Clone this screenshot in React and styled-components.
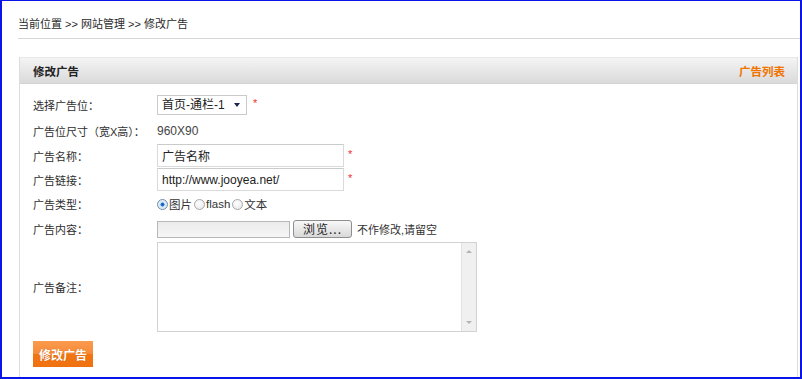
import React from "react";
import styled, { createGlobalStyle } from "styled-components";

const GlobalStyle = createGlobalStyle`
  html, body {
    margin: 0;
    padding: 0;
    background: #fff;
  }
  body {
    font-family: "Liberation Sans", "Noto Sans CJK SC", sans-serif;
    font-size: 12px;
    color: #333;
  }
`;

export default function App() {
  return (
    <Frame>
      <GlobalStyle />
      <Crumbs>当前位置 &gt;&gt; 网站管理 &gt;&gt; 修改广告</Crumbs>
      <Panel>
        <PanelHead>
          <PanelTitle>修改广告</PanelTitle>
          <HeadLink href="#">广告列表</HeadLink>
        </PanelHead>
        <FormBody>
          <Row $h={24}>
            <Label>选择广告位：</Label>
            <SelectBox>
              <Select defaultValue="1">
                <option value="1">首页-通栏-1</option>
              </Select>
              <Caret />
            </SelectBox>
            <Req $gap={6}>*</Req>
          </Row>
          <Row $h={27}>
            <Label>广告位尺寸（宽X高）：</Label>
            <Value>960X90</Value>
          </Row>
          <Row $h={24}>
            <Label>广告名称：</Label>
            <TextInput defaultValue="广告名称" />
            <Req $gap={4}>*</Req>
          </Row>
          <Row $h={24}>
            <Label>广告链接：</Label>
            <TextInput defaultValue="http://www.jooyea.net/" />
            <Req $gap={4}>*</Req>
          </Row>
          <Row $h={24}>
            <Label>广告类型：</Label>
            <RadioGroup>
              <Radio $on />
              <RadioText>图片</RadioText>
              <Radio />
              <RadioText>flash</RadioText>
              <Radio />
              <RadioText>文本</RadioText>
            </RadioGroup>
          </Row>
          <Row $h={26}>
            <Label>广告内容：</Label>
            <FileBox />
            <Browse type="button">浏览...</Browse>
            <Hint>不作修改,请留空</Hint>
          </Row>
          <Row $h={90}>
            <Label>广告备注：</Label>
            <AreaBox>
              <Area />
              <ScrollTrack>
                <Arrow $dir="up" />
                <Arrow $dir="down" />
              </ScrollTrack>
            </AreaBox>
          </Row>
          <Submit type="button">修改广告</Submit>
        </FormBody>
      </Panel>
    </Frame>
  );
}

const Frame = styled.div`
  box-sizing: border-box;
  width: 802px;
  height: 379px;
  border: 2px solid #0a14e8;
  border-top-width: 1px;
  padding-left: 16px;
  display: flex;
  flex-direction: column;
  overflow: hidden;
`;

const Crumbs = styled.div`
  box-sizing: border-box;
  height: 38px;
  padding-top: 16px;
  line-height: 14px;
  font-size: 11px;
  color: #2a2a2a;
  border-bottom: 1px solid #d6d6d6;
`;

const Panel = styled.div`
  flex: 1;
  margin: 18px 2px 0 1px;
  border-left: 1px solid #dcdcdc;
  border-right: 1px solid #dcdcdc;
`;

const PanelHead = styled.div`
  box-sizing: border-box;
  height: 27px;
  padding: 0 12px 0 13px;
  display: flex;
  align-items: center;
  justify-content: space-between;
  border-top: 1px solid #e8e8e8;
  border-bottom: 1px solid #d4d4d4;
  background: linear-gradient(#f4f4f4, #dadada);
`;

const PanelTitle = styled.span`
  font-size: 11.5px;
  font-weight: bold;
  color: #222;
`;

const HeadLink = styled.a`
  font-size: 11.5px;
  font-weight: bold;
  color: #f07400;
  text-decoration: none;
`;

const FormBody = styled.div`
  padding: 9px 0 0 13px;
  display: flex;
  flex-direction: column;
`;

const Row = styled.div`
  height: ${(p) => p.$h}px;
  display: flex;
  align-items: center;
`;

const Label = styled.span`
  width: 124px;
  flex-shrink: 0;
  font-size: 11px;
  color: #2e2e2e;
`;

const Value = styled.span`
  font-size: 12px;
  color: #444;
`;

const SelectBox = styled.div`
  box-sizing: border-box;
  width: 90px;
  height: 20px;
  padding: 0 6px 0 4px;
  display: flex;
  align-items: center;
  border: 1px solid #cacaca;
  background: #fff;
`;

const Select = styled.select`
  flex: 1;
  min-width: 0;
  appearance: none;
  border: none;
  outline: none;
  padding: 0;
  background: transparent;
  font-family: "Liberation Sans", "Noto Sans CJK SC", sans-serif;
  font-size: 12px;
  color: #222;
`;

const Caret = styled.span`
  width: 0;
  height: 0;
  border-left: 3px solid transparent;
  border-right: 3px solid transparent;
  border-top: 4px solid #1d2450;
`;

const Req = styled.span`
  margin-left: ${(p) => p.$gap}px;
  align-self: flex-start;
  margin-top: 4px;
  font-size: 11px;
  color: #ee3333;
`;

const TextInput = styled.input`
  box-sizing: border-box;
  width: 187px;
  height: 23px;
  margin-bottom: 1px;
  padding: 0 4px;
  border: 1px solid #dadada;
  border-top-color: #cbcbcb;
  outline: none;
  font-family: "Liberation Sans", "Noto Sans CJK SC", sans-serif;
  font-size: 12px;
  color: #222;
`;

const RadioGroup = styled.div`
  display: flex;
  align-items: center;
`;

const Radio = styled.span`
  box-sizing: border-box;
  width: 11px;
  height: 11px;
  margin-right: 1px;
  border-radius: 50%;
  border: 1px solid ${(p) => (p.$on ? "#6f8db0" : "#a8a8a8")};
  background: ${(p) =>
    p.$on
      ? "radial-gradient(circle, #0f5ec4 0, #2a78d2 28%, #d9e6f4 36%, #eef2f7 100%)"
      : "radial-gradient(circle at 40% 35%, #ffffff 0, #e4e4e4 100%)"};
`;

const RadioText = styled.span`
  margin-right: 2px;
  font-size: 11.5px;
  color: #333;
`;

const FileBox = styled.span`
  box-sizing: border-box;
  width: 133px;
  height: 17px;
  border: 1px solid #b8b8b8;
  background: linear-gradient(#ebebeb, #f6f6f6);
`;

const Browse = styled.button`
  box-sizing: border-box;
  width: 59px;
  height: 18px;
  margin-left: 3px;
  padding: 0;
  border: 1px solid #8e8e8e;
  border-radius: 3px;
  background: linear-gradient(#f8f8f8, #d9d9d9);
  font-family: "Noto Sans CJK SC", sans-serif;
  font-size: 12px;
  line-height: 14px;
  letter-spacing: 1px;
  color: #222;
`;

const Hint = styled.span`
  margin-left: 5px;
  font-size: 11px;
  color: #333;
`;

const AreaBox = styled.div`
  box-sizing: border-box;
  width: 320px;
  height: 90px;
  display: flex;
  border: 1px solid #d2d2d2;
`;

const Area = styled.textarea`
  flex: 1;
  border: none;
  outline: none;
  resize: none;
  padding: 2px;
  font-family: "Liberation Sans", "Noto Sans CJK SC", sans-serif;
  font-size: 12px;
`;

const ScrollTrack = styled.div`
  width: 14px;
  padding: 7px 0;
  display: flex;
  flex-direction: column;
  align-items: center;
  justify-content: space-between;
  border-left: 1px solid #e2e2e2;
  background: #f0f0f0;
`;

const Arrow = styled.span`
  width: 0;
  height: 0;
  border-left: 3px solid transparent;
  border-right: 3px solid transparent;
  ${(p) =>
    p.$dir === "up"
      ? "border-bottom: 3px solid #b4b4b4;"
      : "border-top: 3px solid #b4b4b4;"}
`;

const Submit = styled.button`
  align-self: flex-start;
  width: 60px;
  height: 26px;
  margin-top: 9px;
  padding: 0;
  border: none;
  background: linear-gradient(#fa9b4e 0%, #f78a38 50%, #f27614 51%, #ef700f 100%);
  font-family: "Liberation Sans", "Noto Sans CJK SC", sans-serif;
  font-size: 12px;
  font-weight: bold;
  color: #fff;
  text-shadow: 0 0 1px rgba(160, 70, 0, 0.5);
`;
